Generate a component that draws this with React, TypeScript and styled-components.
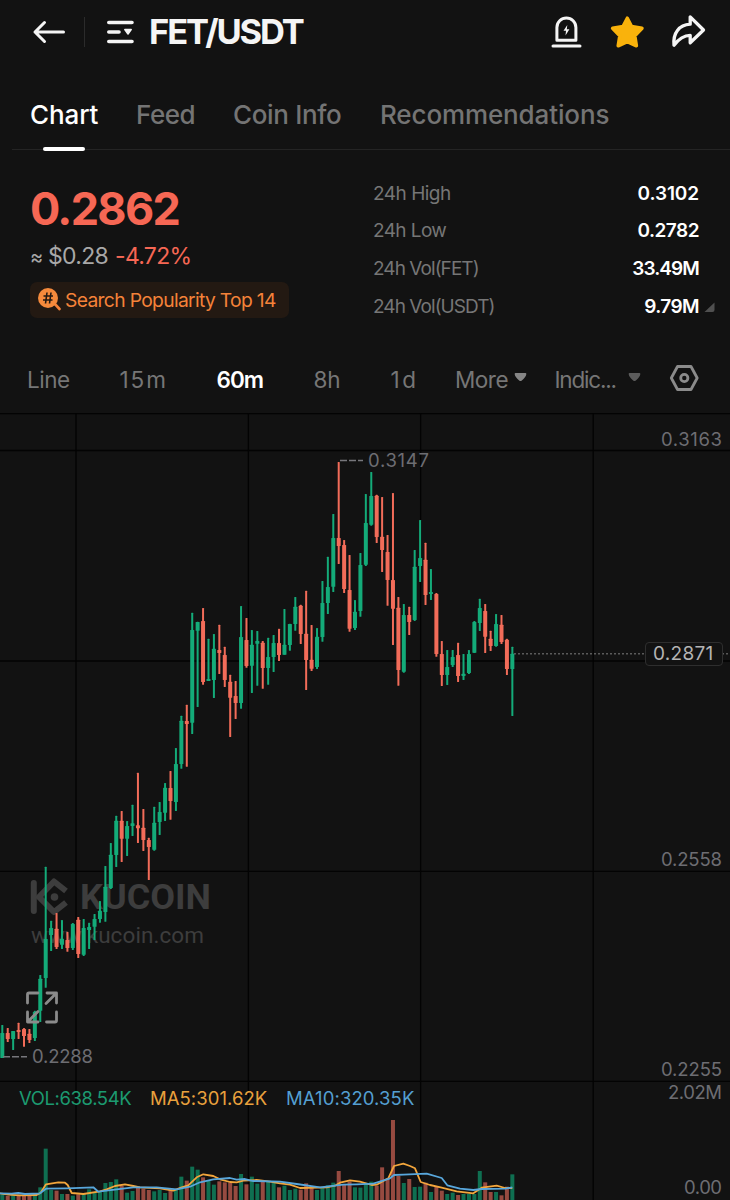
import React from "react";
import styled, { createGlobalStyle } from "styled-components";

const GlobalStyle = createGlobalStyle`
  *, *::before, *::after { box-sizing: border-box; }
  html, body { margin: 0; padding: 0; background: #121212; }
  body { font-family: Inter, "Liberation Sans", sans-serif; color: #f5f5f5; }
`;

const Screen = styled.main`
  width: 730px;
  height: 1200px;
  overflow: hidden;
  display: flex;
  flex-direction: column;
  background: #121212;
`;

const Header = styled.header`
  height: 64px;
  flex: none;
  display: flex;
  align-items: center;
  padding: 0 23px 0 32px;
`;

const HeaderDivider = styled.span`
  width: 1px;
  height: 30px;
  margin: 0 21px 0 18px;
  background: #2b2b2b;
`;

const Pair = styled.h1`
  flex: 1;
  margin: 0 0 0 15px;
  font-size: 34.5px;
  line-height: 64px;
  font-weight: 700;
  letter-spacing: -2.1px;
  color: #f5f5f5;
`;

const HeaderActions = styled.div`
  display: flex;
  align-items: center;
  gap: 26px;
`;

const Tabs = styled.nav`
  height: 86px;
  flex: none;
  margin-left: 12px;
  padding-left: 18px;
  display: flex;
  gap: 38px;
  border-bottom: 1px solid #242424;
`;

const Tab = styled.span<{ $active?: boolean; $width: number; $spacing?: number }>`
  width: ${(p) => p.$width}px;
  height: 86px;
  display: flex;
  flex-direction: column;
  justify-content: space-between;
  white-space: nowrap;
  font-size: 26px;
  line-height: 101px;
  font-weight: 500;
  letter-spacing: ${(p) => p.$spacing ?? 0}px;
  color: ${(p) => (p.$active ? "#ffffff" : "#747474")};

  &::after {
    content: "";
    align-self: center;
    flex: none;
    width: 42px;
    height: 4px;
    margin-top: -18px;
    border-radius: 2px;
    background: ${(p) => (p.$active ? "#ffffff" : "transparent")};
  }
`;

const Ticker = styled.section`
  height: 193px;
  flex: none;
  display: flex;
  justify-content: space-between;
  padding: 24px 14px 0 30px;
`;

const PriceBlock = styled.div`
  display: flex;
  flex-direction: column;
  align-items: flex-start;
`;

const Price = styled.div`
  height: 69px;
  font-size: 45px;
  line-height: 70px;
  font-weight: 700;
  letter-spacing: -1.7px;
  color: #f66754;
`;

const SubPrice = styled.div`
  height: 39px;
  display: flex;
  font-size: 23px;
  line-height: 27px;
  white-space: nowrap;
  color: #a8a8a8;
`;

const Approx = styled.span`
  width: 18px;
  font-size: 20px;
  line-height: 28px;
`;

const Fiat = styled.span`
  width: 67px;
  letter-spacing: -0.7px;
`;

const Change = styled.span`
  color: #f66754;
  letter-spacing: -0.7px;
`;

const PopularityTag = styled.div`
  width: 259px;
  height: 36px;
  display: flex;
  flex: none;
  align-items: center;
  gap: 4px;
  padding-left: 7px;
  border-radius: 7px;
  background: #231912;
  color: #f58239;
  font-size: 19.3px;
  letter-spacing: -0.68px;
  line-height: 37px;
  white-space: nowrap;
`;

const TagIcon = styled.svg`
  flex: none;
  margin-top: -2px;
`;

const Stats = styled.dl`
  width: 343px;
  margin: 1px 0 0;
  display: flex;
  flex-direction: column;
`;

const StatRow = styled.div`
  height: 37.6px;
  display: flex;
  align-items: center;
  font-size: 19px;
  line-height: 38px;
`;

const StatLabel = styled.dt<{ $spacing: number }>`
  flex: 1;
  color: #767676;
  letter-spacing: ${(p) => p.$spacing}px;
`;

const StatValue = styled.dd<{ $spacing: number }>`
  margin: 0;
  font-weight: 600;
  letter-spacing: ${(p) => p.$spacing}px;
  color: #ffffff;
`;

const StatCorner = styled.span`
  width: 17px;
  height: 10px;
  display: flex;
  padding-left: 5px;
`;

const Intervals = styled.nav`
  height: 70px;
  flex: none;
  display: flex;
  align-items: center;
  padding-left: 27px;
`;

const Interval = styled.span<{ $width: number; $active?: boolean; $spacing?: number }>`
  width: ${(p) => p.$width}px;
  margin-top: 3px;
  display: flex;
  flex: none;
  align-items: center;
  white-space: nowrap;
  font-size: 22.5px;
  line-height: 32px;
  font-weight: ${(p) => (p.$active ? 600 : 400)};
  letter-spacing: ${(p) => p.$spacing ?? 0}px;
  color: ${(p) => (p.$active ? "#ffffff" : "#767676")};
`;

const Caret = styled.svg<{ $gap: number }>`
  flex: none;
  margin: -5px 0 0 ${(p) => p.$gap}px;
`;

const ChartArea = styled.section`
  height: 787px;
  flex: none;
  position: relative;
`;

const ChartSvg = styled.svg`
  display: block;
`;

const Legend = styled.div`
  position: absolute;
  left: 19px;
  top: 673px;
  display: grid;
  grid-template-columns: 131px 136px 140px;
  font-size: 18.5px;
  line-height: 24px;
  white-space: nowrap;
`;

const LegendItem = styled.span<{ $color: string; $spacing: number }>`
  color: ${(p) => p.$color};
  letter-spacing: ${(p) => p.$spacing}px;
`;

const LastPrice = styled.div`
  position: absolute;
  left: 645px;
  top: 229px;
  width: 78px;
  height: 24px;
  border: 1px solid #2e2e2e;
  border-radius: 4px;
  background: #121212;
  color: #b4b4b4;
  font-size: 19px;
  line-height: 22px;
  letter-spacing: 0.3px;
  padding-left: 7px;
`;

const UP = "#14ab79";
const DOWN = "#f26c59";

type Candle = [kind: "u" | "d", high: number, low: number, top: number, bottom: number];

const candles: Candle[] = [
  ["u", 1025, 1058, 1033, 1058], ["d", 1028, 1042, 1033, 1039], ["u", 1031, 1050, 1031, 1039],
  ["d", 1022.7, 1039, 1030, 1032], ["d", 1028, 1046.7, 1029, 1036], ["d", 1029, 1043, 1033.7, 1040],
  ["u", 1010.7, 1041, 1012, 1038], ["u", 975, 1022, 978.7, 1010.7], ["u", 866.7, 987.7, 939, 978],
  ["u", 920.7, 951, 928, 935], ["d", 913, 949, 928.7, 947], ["u", 920, 949, 938.7, 944.7],
  ["d", 932, 951.7, 940, 948], ["u", 923, 950, 924, 948], ["d", 917, 958, 919.7, 954],
  ["u", 919, 956, 928, 954.7], ["u", 922.7, 949, 927, 930], ["u", 914, 940, 919, 926.7],
  ["u", 901, 922.7, 910.7, 919], ["u", 866, 921.7, 886.7, 912], ["u", 843, 889, 854.7, 888],
  ["u", 815.7, 867, 820.7, 855], ["d", 811, 862, 820.7, 838.7], ["u", 821, 856, 826, 838.7],
  ["u", 804.7, 836, 823.3, 826], ["d", 772.7, 843, 825.3, 828.3], ["d", 809, 851, 827.7, 840],
  ["d", 837.7, 880, 840, 847], ["u", 806.7, 850.7, 822.7, 849.7], ["u", 802, 835, 812, 822],
  ["u", 783, 821, 787.7, 812.7], ["d", 771, 819.7, 788, 801], ["u", 748, 811, 764, 802],
  ["u", 715.7, 768.7, 720.7, 764], ["d", 704.7, 766.7, 721, 724], ["u", 612.7, 734, 630, 722.7],
  ["u", 621.7, 707, 622, 630.7], ["d", 608, 684.7, 621, 682], ["u", 638.7, 680.7, 679, 681],
  ["u", 634, 698, 648.7, 680], ["d", 624.7, 674, 650, 653], ["d", 646.7, 687, 655, 680],
  ["d", 674.7, 737, 681.7, 697.7], ["d", 681, 719, 696, 703], ["u", 606, 708.7, 637, 703],
  ["d", 618, 667.7, 640, 666], ["u", 630, 693, 644.7, 665.7], ["u", 631, 685.7, 641, 643.7],
  ["d", 641, 688.7, 642.7, 668], ["u", 637.7, 684.7, 657, 668], ["u", 635, 672, 643, 657],
  ["d", 628.7, 661, 643, 655], ["u", 609, 654.7, 644.7, 654.7], ["u", 623.7, 650.7, 624, 645],
  ["u", 597, 630.7, 606.7, 624], ["d", 604.7, 644, 605.7, 634], ["d", 590.7, 690, 633.7, 660],
  ["d", 625, 671, 659.7, 668.7], ["u", 628, 669, 636.7, 667], ["u", 581, 641.7, 603, 637],
  ["u", 556.7, 614, 587, 603], ["u", 514, 592, 538, 586.7], ["d", 462, 564, 538, 546],
  ["d", 540, 593, 545, 589], ["d", 555, 631.7, 590, 628.7], ["u", 600, 630, 611.7, 628],
  ["u", 553, 616.7, 565, 611], ["u", 494, 566, 523, 564.7], ["u", 472, 525.7, 496, 524.7],
  ["d", 494.7, 543, 495.7, 537], ["d", 497, 572, 536.7, 550], ["d", 535, 605.7, 552, 580],
  ["d", 493, 645, 580, 608.7], ["d", 597, 685.7, 607.7, 670], ["u", 604, 672.7, 615, 671.7],
  ["d", 606.7, 635, 615, 622], ["u", 550, 621, 566.7, 620], ["u", 520, 582, 558, 566],
  ["d", 542.7, 605, 559.7, 595], ["u", 569, 600, 592, 594], ["d", 593, 656.7, 594, 654],
  ["d", 641, 686, 654, 675], ["u", 650, 685, 667, 675], ["u", 650, 667, 657, 665],
  ["d", 642.7, 682, 655, 676], ["u", 654, 680, 673.7, 676], ["u", 650, 674, 654, 673],
  ["u", 621, 653, 622, 652.7], ["u", 598.7, 631, 608, 623], ["d", 604, 653, 611, 636.7],
  ["d", 630.7, 651, 638.7, 646], ["u", 614, 646.7, 624, 646], ["d", 615, 644, 624.7, 642],
  ["d", 638.7, 675, 639.7, 669], ["u", 646.7, 716, 653.7, 669],
];

/* Bar heights in thirds of a pixel, one per candle. */
const volumes = [
  17, 12, 15, 16, 14, 13, 18, 38, 154, 30, 28, 18, 18, 13, 17, 20, 32, 24, 27, 51, 54, 62, 43, 22,
  27, 40, 34, 30, 26, 30, 21, 32, 32, 70, 58, 100, 91, 68, 57, 46, 56, 53, 53, 42, 78, 47, 70, 49,
  57, 54, 52, 38, 43, 30, 34, 31, 50, 42, 30, 38, 44, 52, 87, 47, 55, 38, 37, 52, 55, 43, 98, 65,
  240, 72, 51, 63, 39, 40, 52, 24, 40, 28, 18, 22, 15, 18, 18, 18, 87, 53, 24, 24, 14, 40, 77,
];

const ma5: [number, number][] = [
  [0, 370], [25, 374], [60, 376], [110, 375], [122, 368], [138, 343], [175, 337], [195, 338],
  [203, 345], [215, 369], [250, 372], [300, 364], [320, 358], [345, 348], [375, 343], [400, 348],
  [420, 352], [480, 355], [520, 362], [545, 352], [565, 346], [590, 322], [610, 313], [640, 318],
  [660, 328], [690, 336], [710, 337], [730, 332], [770, 330], [810, 335], [840, 340], [870, 344],
  [900, 354], [980, 352], [1005, 347], [1020, 338], [1050, 331], [1080, 335], [1115, 345],
  [1130, 344], [1165, 325], [1182, 288], [1210, 281], [1230, 288], [1245, 295], [1262, 336],
  [1290, 345], [1325, 353], [1370, 364], [1420, 370], [1445, 353], [1490, 347], [1515, 354],
  [1537, 354],
];

const ma10: [number, number][] = [
  [0, 370], [35, 371], [55, 369], [75, 372], [120, 370], [138, 356], [200, 355], [280, 352],
  [295, 365], [350, 358], [400, 352], [470, 352], [530, 358], [570, 350], [600, 337], [640, 328],
  [690, 324], [710, 329], [735, 327], [760, 333], [840, 335], [890, 342], [960, 352], [1030, 344],
  [1070, 343], [1120, 341], [1170, 325], [1182, 315], [1210, 314], [1280, 311], [1325, 324],
  [1342, 346], [1380, 356], [1420, 360], [1445, 357], [1515, 356], [1537, 352],
];

const linePoints = (pts: [number, number][]) =>
  pts.map(([x, y]) => `${(x / 3).toFixed(1)},${(1070 + y / 3).toFixed(1)}`).join(" ");

const candleX = (i: number) => 2.3 + i * 5.426;

function Chart() {
  return (
    <ChartSvg width="730" height="787" viewBox="0 413 730 787">
      <g stroke="#030303" strokeWidth="1.3">
        {[413.5, 450.5, 661, 871.4, 1081.4].map((y) => (
          <line key={y} x1="0" x2="730" y1={y} y2={y} />
        ))}
        {[76, 248.4, 420.6, 593.2].map((x) => (
          <line key={x} x1={x} x2={x} y1="413" y2="1200" />
        ))}
      </g>

      <g fill="none" stroke="#3d3d3d" strokeWidth="6" strokeLinejoin="round">
        <path d="M33.800 883V911" strokeLinecap="round" />
        <path d="M66 891L54 881.500L39 897L54 912L66 902.500" />
      </g>
      <circle cx="54.500" cy="897" r="3.800" fill="#3d3d3d" />
      <g fill="#3d3d3d">
        <text x="80" y="909" fontFamily="Roboto, sans-serif" fontSize="35" fontWeight="700" textLength="131" lengthAdjust="spacingAndGlyphs">
          KUCOIN
        </text>
        <text x="31" y="943" fontFamily="Roboto, sans-serif" fontSize="22.500" textLength="173">
          www.kucoin.com
        </text>
      </g>

      {candles.map(([kind, high, low, top, bottom], i) => (
        <g key={i} fill={kind === "u" ? UP : DOWN}>
          <rect x={candleX(i) - 1} y={high} width="2" height={low - high} rx="0.5" />
          <rect x={candleX(i) - 2} y={top} width="4" height={bottom - top} rx="0.5" />
        </g>
      ))}

      <g fill="none" stroke="#8b8b8b" strokeWidth="2.800" strokeLinecap="round" strokeLinejoin="round">
        <path d="M27.500 1003V994.500Q27.500 993 29 993H38" />
        <path d="M47 993H56.500V1003M56 993.500L46 1003.500" />
        <path d="M56.500 1012V1020.500Q56.500 1022 55 1022H46.500" />
        <path d="M27.500 1012V1022H38M28 1021.500L38 1011.500" />
      </g>

      <g stroke="#77777c" strokeWidth="1.600" strokeDasharray="7 2">
        <line x1="340" x2="363" y1="460.500" y2="460.500" />
        <line x1="3" x2="27" y1="1056.800" y2="1056.800" />
      </g>
      <line x1="514" x2="730" y1="653.800" y2="653.800" stroke="#5a5a5a" strokeWidth="1.500" strokeDasharray="2 2" />

      <g fill="#6d6d72" fontFamily="Inter, sans-serif" fontSize="18.500">
        <text x="368" y="466.500" textLength="61">0.3147</text>
        <text x="32" y="1063" textLength="61">0.2288</text>
        <text x="661" y="445.500" textLength="61">0.3163</text>
        <text x="661" y="865.500" textLength="61">0.2558</text>
        <text x="661" y="1076" textLength="61">0.2255</text>
        <text x="668" y="1099" textLength="54">2.02M</text>
        <text x="684" y="1194" textLength="38">0.00</text>
      </g>

      {volumes.map((v, i) => (
        <rect
          key={i}
          x={candleX(i) - 2}
          y={1200 - v / 3}
          width="4"
          height={v / 3}
          fill={candles[i][0] === "u" ? "#0f6f51" : "#964a40"}
        />
      ))}
      <polyline points={linePoints(ma5)} fill="none" stroke="#f3a63c" strokeWidth="1.800" strokeLinejoin="round" />
      <polyline points={linePoints(ma10)} fill="none" stroke="#58a7dc" strokeWidth="1.800" strokeLinejoin="round" />
    </ChartSvg>
  );
}

const CaretDown = ({ gap, color }: { gap: number; color: string }) => (
  <Caret $gap={gap} width="13" height="10" viewBox="0 0 13 10">
    <path d="M1.500 1H11.500Q12.500 1 12.300 2.200Q12 5 7.500 8.700Q6.500 9.500 5.500 8.700Q1 5 .700 2.200Q.500 1 1.500 1Z" fill={color} />
  </Caret>
);

export default function App() {
  return (
    <>
      <GlobalStyle />
      <Screen>
        <Header>
          <svg width="34" height="26" viewBox="32 19 34 26" fill="none" stroke="#f5f5f5" strokeWidth="3" strokeLinecap="round" strokeLinejoin="round">
            <path d="M63.500 32H35M44.500 22.500L35 32L44.500 41.500" />
          </svg>
          <HeaderDivider />
          <svg width="28" height="26" viewBox="106 19 28 26">
            <path d="M108.800 22.500H132M108.800 32H119M108.800 41.500H132" stroke="#f5f5f5" strokeWidth="3.600" strokeLinecap="round" />
            <path d="M124.800 29.500H131.200L128 34Z" fill="#f5f5f5" stroke="#f5f5f5" strokeWidth="1.500" strokeLinejoin="round" />
          </svg>
          <Pair>FET/USDT</Pair>
          <HeaderActions>
            <svg width="34" height="36" viewBox="549 14 34 36" fill="none" stroke="#f5f5f5" strokeWidth="3" strokeLinecap="round" strokeLinejoin="round">
              <path d="M556.900 40.200V27.500A9.500 9.500 0 0 1 575.900 27.500V40.200Z" />
              <path d="M553 46H580" />
              <path d="M567.300 25L563.500 30.800H566L565.500 35.500L569.400 29.300H566.800Z" fill="#f5f5f5" stroke="none" />
            </svg>
            <svg width="36" height="36" viewBox="609 14 36 36">
              <path d="M627.300 18.200L631.600 26.500L642 28.300L634.800 35.800L636.400 45.800L627.300 41.600L618.200 45.800L619.800 35.800L612.600 28.300L623 26.500Z" fill="#f9b20b" stroke="#f9b20b" strokeWidth="3.500" strokeLinejoin="round" />
            </svg>
            <svg width="36" height="36" viewBox="671 14 36 36" fill="none" stroke="#f5f5f5" strokeWidth="3.300" strokeLinejoin="round">
              <path d="M690.200 16.800L703.500 30L690.200 42.800V35.300C684 35.300 679 38.500 674 45.200C672.800 33 679 25 690.200 24.200Z" />
            </svg>
          </HeaderActions>
        </Header>

        <Tabs>
          <Tab $active $width={68} $spacing={-0.1}>Chart</Tab>
          <Tab $width={59} $spacing={-0.5}>Feed</Tab>
          <Tab $width={109} $spacing={-0.35}>Coin Info</Tab>
          <Tab $width={230} $spacing={-0.12}>Recommendations</Tab>
        </Tabs>

        <Ticker>
          <PriceBlock>
            <Price>0.2862</Price>
            <SubPrice>
              <Approx>≈</Approx>
              <Fiat>$0.28</Fiat>
              <Change>-4.72%</Change>
            </SubPrice>
            <PopularityTag>
              <TagIcon width="24" height="24" viewBox="37 287 24 24">
                <path d="M54 303L59.500 309" stroke="#f58239" strokeWidth="2.600" strokeLinecap="round" />
                <circle cx="48" cy="298" r="10" fill="#f58a3c" />
                <path d="M47 292.500L45.500 303.500M51 292.500L49.500 303.500M43.500 296H53M43 300H52.500" stroke="#231912" strokeWidth="1.600" />
              </TagIcon>
              Search Popularity Top 14
            </PopularityTag>
          </PriceBlock>
          <Stats>
            <StatRow><StatLabel $spacing={-0.5}>24h High</StatLabel><StatValue $spacing={-0.1}>0.3102</StatValue><StatCorner /></StatRow>
            <StatRow><StatLabel $spacing={-0.6}>24h Low</StatLabel><StatValue $spacing={-0.5}>0.2782</StatValue><StatCorner /></StatRow>
            <StatRow><StatLabel $spacing={-0.95}>24h Vol(FET)</StatLabel><StatValue $spacing={-0.9}>33.49M</StatValue><StatCorner /></StatRow>
            <StatRow>
              <StatLabel $spacing={-0.95}>24h Vol(USDT)</StatLabel>
              <StatValue $spacing={-0.6}>9.79M</StatValue>
              <StatCorner>
                <svg width="11" height="10" viewBox="0 0 11 10">
                  <path d="M10.500 .500V8Q10.500 10 8.500 10H.500Z" fill="#505050" />
                </svg>
              </StatCorner>
            </StatRow>
          </Stats>
        </Ticker>

        <Intervals>
          <Interval $width={92.5} $spacing={-0.5}>Line</Interval>
          <Interval $width={97} $spacing={1.9}>15m</Interval>
          <Interval $width={97} $active $spacing={-1}>60m</Interval>
          <Interval $width={77} $spacing={-0.2}>8h</Interval>
          <Interval $width={64.5} $spacing={2.5}>1d</Interval>
          <Interval $width={99.5} $spacing={-0.5}>More<CaretDown gap={5.5} color="#858585" /></Interval>
          <Interval $width={114} $spacing={-1.2}>Indic...<CaretDown gap={12.5} color="#5c5c5c" /></Interval>
          <svg width="31" height="28" viewBox="669 364 31 28" fill="none" stroke="#8b8b8b" strokeWidth="2.800" strokeLinejoin="round">
            <path d="M677.500 366.500H691L697.200 378L691 389.500H677.500L671.300 378Z" />
            <circle cx="684.300" cy="378" r="3.600" />
          </svg>
        </Intervals>

        <ChartArea>
          <Chart />
          <Legend>
            <LegendItem $color="#1c9a70" $spacing={-0.4}>VOL:638.54K</LegendItem>
            <LegendItem $color="#e9a13d" $spacing={0.05}>MA5:301.62K</LegendItem>
            <LegendItem $color="#549fd1" $spacing={0.1}>MA10:320.35K</LegendItem>
          </Legend>
          <LastPrice>0.2871</LastPrice>
        </ChartArea>
      </Screen>
    </>
  );
}
